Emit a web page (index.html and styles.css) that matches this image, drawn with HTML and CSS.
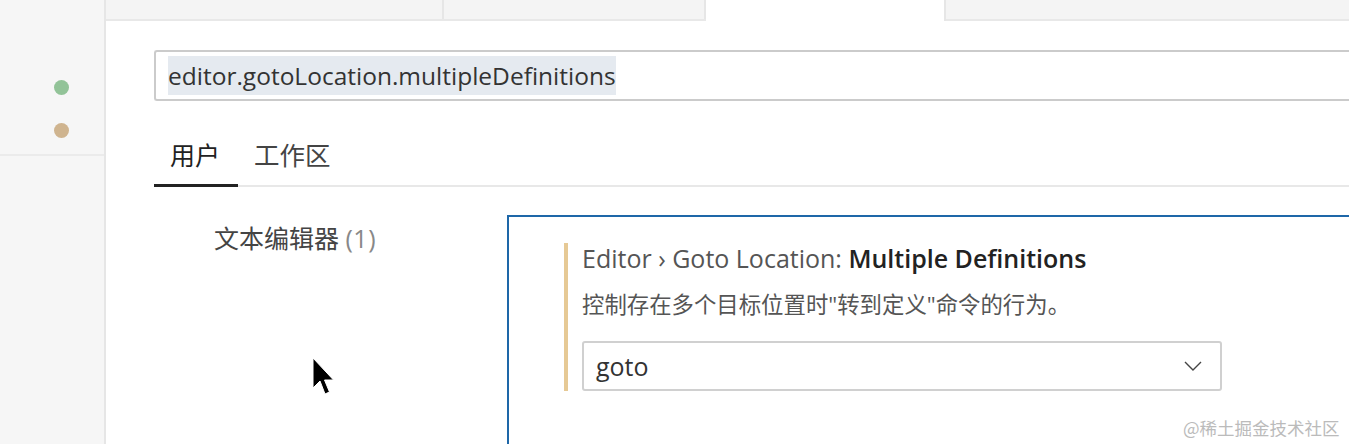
FILE: index.html
```html
<!DOCTYPE html>
<html lang="zh">
<head>
<meta charset="utf-8">
<link rel="stylesheet" href="styles.css">
</head>
<body>
<div class="app">
  <aside class="sidebar">
    <div class="dots">
      <span class="dot green"></span>
      <span class="dot tan"></span>
    </div>
    <div class="side-sep"></div>
  </aside>
  <main class="main">
    <div class="tabstrip">
      <div class="etab t1"></div>
      <div class="etab t2"></div>
      <div class="etab t3 active"></div>
      <div class="etab t4"></div>
    </div>
    <div class="content">
      <div class="search"><span class="sel">editor.gotoLocation.multipleDefinitions</span></div>
      <div class="scope">
        <div class="scope-tab on">用户</div>
        <div class="scope-tab">工作区</div>
      </div>
      <div class="body">
        <div class="toc"><span class="toc-item">文本编辑器 <span class="count">(1)</span></span></div>
        <div class="panel">
          <div class="setting">
            <div class="title">Editor › Goto Location: <b>Multiple Definitions</b></div>
            <div class="desc">控制存在多个目标位置时"转到定义"命令的行为。</div>
            <div class="select">
              <span>goto</span>
              <svg class="chev" width="18" height="10" viewBox="0 0 18 10"><path d="M1 1 L9 9 L17 1" fill="none" stroke="#444" stroke-width="1.4"/></svg>
            </div>
          </div>
        </div>
      </div>
    </div>
  </main>
  <div class="watermark">@稀土掘金技术社区</div>
  <svg class="cursor" width="23" height="40" viewBox="0 0 23 40"><path d="M1 1 L1 31 L8 24 L13 37 L17.5 35 L12.5 23 L21.5 23 Z" fill="#000" stroke="#fff" stroke-width="1"/></svg>
</div>
</body>
</html>
```
FILE: styles.css
```css
html, body { margin: 0; padding: 0; background: #fff; overflow: hidden; }
body { font-family: "Open Sans", "Noto Sans CJK SC", sans-serif; color: #333; }
.app { display: flex; width: 1349px; height: 444px; position: relative; }
.sidebar { width: 104px; flex: none; background: #f6f6f6; border-right: 2px solid #e6e6e6; display: flex; flex-direction: column; }
.dots { height: 154px; display: flex; flex-direction: column; align-items: center; padding-top: 80px; gap: 28px; box-sizing: border-box; padding-left: 18px; }
.dot { width: 15px; height: 15px; border-radius: 50%; }
.dot.green { background: #92c398; }
.dot.tan { background: #cfb48f; }
.side-sep { height: 2px; background: #ebebeb; }
.main { flex: 1; display: flex; flex-direction: column; min-width: 0; }
.tabstrip { height: 19px; display: flex; border-bottom: 2px solid #e8e8e8; background: #f3f3f3; }
.etab { height: 19px; background: #f4f4f4; border-right: 2px solid #e6e6e6; box-sizing: border-box; }
.t1 { width: 338px; }
.t2 { width: 262px; }
.t3 { width: 240px; background: #fff; border-right: 2px solid #e6e6e6; height: 21px; }
.t4 { flex: 1; border-right: none; }
.content { padding-left: 48px; padding-top: 29px; display: flex; flex-direction: column; }
.search { height: 51px; border: 2px solid #cbcbcb; border-right: none; border-radius: 3px 0 0 3px; box-sizing: border-box; display: flex; align-items: center; padding-left: 12px; }
.sel { background: #e5eaf0; font-size: 24.5px; line-height: 39px; color: #333; }
.scope { display: flex; margin-top: 35px; border-bottom: 2px solid #e8e8e8; height: 51px; box-sizing: border-box; }
.scope-tab { font-size: 25.5px; color: #444; line-height: 38px; padding-left: 16px; }
.scope-tab.on { font-size: 25px; color: #222; border-bottom: 3px solid #222; margin-bottom: -2px; padding: 0 18px 0 16px; }
.body { display: flex; padding-top: 28px; }
.toc { width: 353px; flex: none; padding-left: 60px; box-sizing: border-box; padding-top: 10px; }
.toc-item { font-size: 25px; line-height: 26px; color: #444; }
.count { color: #888; font-size: 25px; letter-spacing: 0.5px; }
.panel { flex: 1; border-top: 2px solid #1e67a8; border-left: 2px solid #1e67a8; height: 240px; padding: 28px 0 0 55px; box-sizing: border-box; }
.setting { border-left: 4px solid #e6c995; padding-left: 14px; width: 658px; box-sizing: border-box; }
.title { font-size: 25px; color: #555; line-height: 30px; margin-top: -2px; }
.title b { font-weight: 600; color: #222; }
.desc { font-size: 22.4px; color: #555; margin-top: 16px; line-height: 32px; }
.select { margin-top: 20px; height: 50px; border: 2px solid #d0d0d0; border-radius: 3px; box-sizing: border-box; display: flex; align-items: center; justify-content: space-between; padding: 0 12px 0 12px; font-size: 25px; color: #333; width: 640px; }
.chev { margin-right: 6px; }
.watermark { position: absolute; left: 1183px; top: 415px; font-size: 17.5px; line-height: 26px; color: #bbb; font-family: "Noto Sans CJK SC", sans-serif; white-space: nowrap; }
.cursor { position: absolute; left: 312px; top: 357px; }
```
